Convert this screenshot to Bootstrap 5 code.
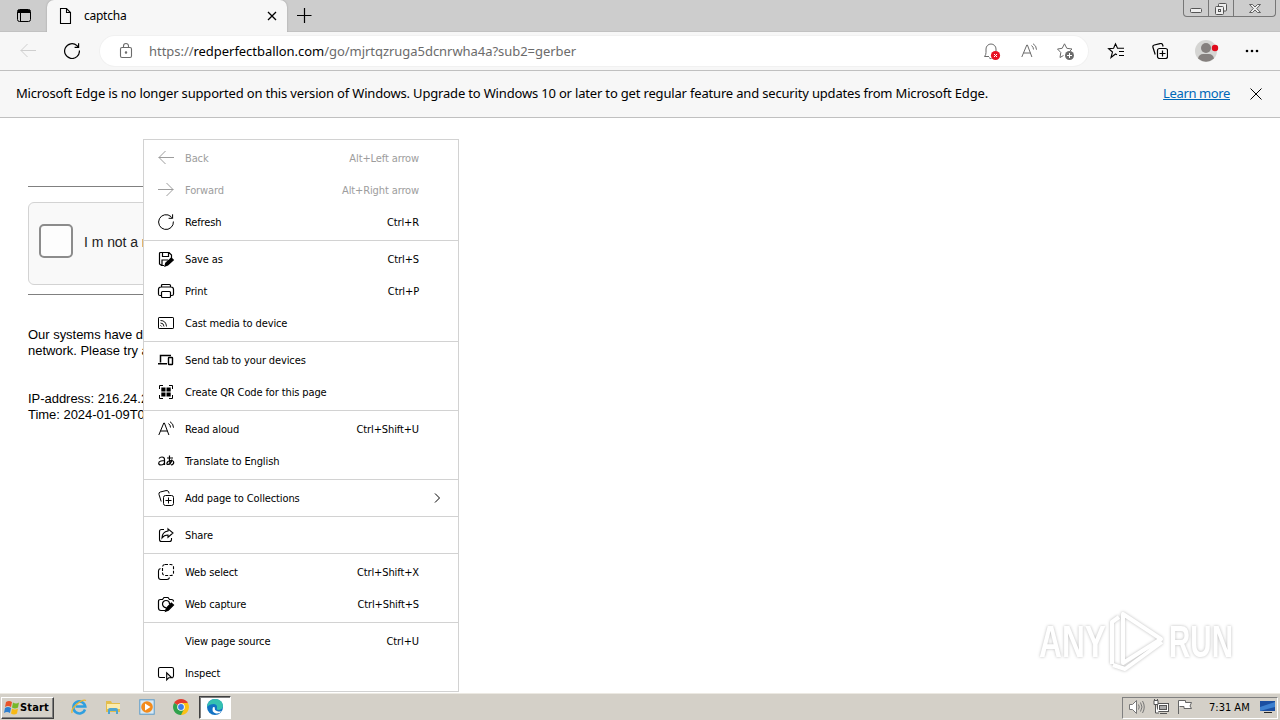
<!DOCTYPE html>
<html lang="en">
<head>
    <meta charset="UTF-8">
    <meta name="viewport" content="width=device-width, initial-scale=1.0">
    <title>captcha</title>
    <link rel="stylesheet" href="https://cdn.jsdelivr.net/npm/bootstrap@5.3.3/dist/css/bootstrap.min.css">
    <style>
        body { height: 720px; font-family: "Noto Sans", sans-serif; font-size: 13px; color: #000; line-height: 1; }
        svg { display: block; flex: none; overflow: visible; }
        svg:not([fill]) { fill: none; }
        svg:not([stroke]) { stroke: currentColor; }
        .titlebar { height: 32px; background: #cdcdcd; border-bottom: 1px solid #c2c2c2; }
        .tab-actions { width: 47px; padding: 8px 0 0 16px; }
        .tab-page { width: 240px; height: 32px; padding: 0 10px 0 11px; background: #f7f7f7; border-radius: 7px 7px 0 0; box-shadow: 0 0 2px #999; clip-path: inset(0 -3px 0 -3px); }
        .tab-title { font-size: 12px; margin-left: 10px; letter-spacing: -.25px; }
        .new-tab { margin: 8px 0 0 7px; }
        .win-buttons { height: 17px; margin-right: 4px; border: 1px solid #777; border-top: 0; border-radius: 0 0 4px 4px; color: #555; }
        .win-buttons > span { height: 16px; width: 25px; border-right: 1px solid #777; }
        .win-buttons > span:last-child { width: 41px; border: 0; }
        .toolbar { height: 39px; background: #f7f7f7; border-bottom: 1px solid #c0c0c0; padding-left: 20px; }
        .reload { margin-left: 28px; }
        .address { width: 988px; height: 30px; margin-left: 20px; border-radius: 15px; background: #fff; box-shadow: 0 0 0 1px #f1f1f1; padding: 0 14px 0 18px; color: #6b6b6b; }
        .address-icons { gap: 21px; }
        .url { font-size: 13px; margin-left: 15px; letter-spacing: -.04px; white-space: nowrap; }
        .more { margin-right: 4px; }
        .infobar { height: 47px; background: #f7f7f7; border-bottom: 1px solid #c0c0c0; padding: 0 17px 2px 16px; }
        .infobar a { color: #0067b8; letter-spacing: -.38px; }
        .infobar-text { letter-spacing: -.175px; white-space: nowrap; }
        .infobar svg { margin: 2px 0 0 3px; }
        .page { font-family: "Liberation Sans", Arial, sans-serif; padding: 68px 28px 0; line-height: 16px; }
        .rule { height: 1px; background: #808080; width: 300px; }
        .captcha { width: 300px; height: 83px; margin: 15px 0 9px; padding: 0 0 5px 10px; background: #f9f9f9; border: 1px solid #d3d3d3; border-radius: 6px; font-size: 14px; color: #222; }
        .captcha-label { padding-top: 2px; letter-spacing: -.05px; }
        .check { width: 34px; height: 34px; border: 2px solid #8c8c8c; border-radius: 5px; background: #fdfdfd; margin-right: 11px; }
        .details { letter-spacing: -.03px; white-space: nowrap; width: 320px; }
        .ctx { left: 143px; top: 21px; width: 316px; padding: 2px 0; background: #fff; border: 1px solid #d2d2d2; font: 11px/32px "DejaVu Sans Condensed", Tahoma, sans-serif; z-index: 2; }
        .ctx-row { height: 32px; padding: 1px 39px 0 14px; letter-spacing: -.12px; }
        .ctx-row > svg { width: 16px; height: 16px; margin: -1px 11px 0 0; }
        .ctx-row.off { color: #9d9d9d; }
        .ctx-row.flyout { padding-right: 16px; }
        .ctx-row > .chevron { width: 9px; height: 10px; margin-right: 0; }
        .ctx-row.no-icon { padding-left: 41px; }
        .ctx-line { height: 1px; background: #d2d2d2; margin: 2px 0; }
        .watermark { right: 46px; bottom: 20px; color: #fff; filter: drop-shadow(0 0 1.8px #bbb); }
        .watermark text { font: bold 44px "Liberation Sans Narrow", "Liberation Sans", sans-serif; fill: #fff; stroke: none; }
        .taskbar { height: 27px; background: #d4d0c8; border-top: 1px solid #ece9e2; font: 11px/1 "DejaVu Sans Condensed", Tahoma, sans-serif; padding: 2px 2px 1px 1px; }
        .start { width: 53px; height: 22px; background: #d4d0c8; border: 1px solid; border-color: #fff #404040 #404040 #fff; box-shadow: inset -1px -1px #808080; padding: 0 0 1px 2px; font-weight: bold; letter-spacing: .15px; }
        .quick { margin-left: 17px; gap: 18px; padding-bottom: 1px; }
        .task { width: 32px; height: 23px; margin-left: 10px; background: #fff; border: 1px solid; border-color: #404040 #fff #fff #404040; box-shadow: inset 1px 1px #808080; padding-bottom: 1px; }
        .tray { width: 156px; height: 22px; border: 1px solid; border-color: #808080 #fff #fff #808080; padding: 0 1px 1px 5px; }
        .clock { margin-left: 16px; white-space: nowrap; }
    </style>
</head>
<body class="d-flex flex-column overflow-hidden bg-white">

    <!-- shared icons, 16x16 grid -->
    <svg width="0" height="0" class="position-absolute">
        <symbol id="back" viewBox="0 0 16 16"><path d="M16 7.500H.7M7.500 1 1 7.500 7.500 14"/></symbol>
        <symbol id="forward" viewBox="0 0 16 16"><path d="M0 7.500h15.300M8.500 1 15 7.500 8.500 14"/></symbol>
        <symbol id="refresh" viewBox="0 0 16 16"><path d="M15.400 7.500A7.400 7.400 0 1 1 13 2.600l1.500 1.600M14.600.3v4h-4"/></symbol>
        <symbol id="collections" viewBox="0 0 16 16"><rect x="5.500" y="5.500" width="10" height="10" rx="2"/><path d="M10.500 7.500v6M7.500 10.500h6M3.200 11.500 1 4.500Q.4 2.500 2.300 2L8 .6q2-.5 2.700 1.400l.4 1.500"/></symbol>
        <symbol id="aloud" viewBox="0 0 16 16"><path d="M.8 14 5.800 2h.6l4.500 12M2.500 10h7M10.500 2.500q2 1.500 2 4M12 .7q3.500 2 3.500 6"/></symbol>
    </svg>

    <div class="titlebar d-flex flex-shrink-0">
        <div class="tab-actions">
            <svg width="16" height="16"><rect x="1.500" y="1.500" width="13" height="12" rx="2"/><path d="M2 3.500h12" stroke-width="3"/><path d="M4.500 4v10"/></svg>
        </div>
        <div class="tab-page d-flex align-items-center">
            <svg width="16" height="16" stroke-width="1.100"><path d="M2.500.5h6l4 4v11h-10zM8.500.5v4h4"/></svg>
            <span class="tab-title">captcha</span>
            <svg class="ms-auto" width="10" height="10" stroke-width="1.300"><path d="m1 1 8 8M9 1 1 9"/></svg>
        </div>
        <svg class="new-tab" width="20" height="16" stroke-width="1.200"><path d="M3 7.500h14.500M10.500 0v15"/></svg>
        <div class="win-buttons d-flex ms-auto">
            <span class="d-flex justify-content-center pt-2"><svg width="12" height="5"><rect x=".5" y=".5" width="11" height="4" rx="1" fill="#eee"/></svg></span>
            <span class="d-flex justify-content-center"><svg width="12" height="12" class="mt-1 mb-1" viewBox="0 1 12 12"><rect x="3.500" y=".5" width="8" height="7.500" rx="1" fill="#eee"/><rect x=".5" y="3.500" width="8" height="8" rx="1" fill="#eee"/><rect x="3.500" y="6.500" width="2" height="2"/></svg></span>
            <span class="d-flex justify-content-center pt-1"><svg width="12" height="9"><path d="M.5.5h3L6 3 8.500.5h3L7.700 4.500l3.800 4h-3L6 6l-2.500 2.500h-3l3.800-4z" fill="#eee" stroke-width=".9"/></svg></span>
        </div>
    </div>

    <div class="toolbar d-flex align-items-center flex-shrink-0">
        <svg width="16" height="16" stroke="#cfcfcf"><use href="#back"/></svg>
        <svg class="reload" width="16" height="16" stroke-width="1.200"><use href="#refresh"/></svg>
        <div class="address d-flex align-items-center">
            <svg width="16" height="16" stroke-width="1.100"><rect x="2.500" y="4.500" width="11" height="10" rx="1.500"/><path d="M5.500 4.500V3a2.500 2.500 0 0 1 5 0v1.500"/><circle cx="8" cy="9.500" r=".7" fill="currentColor"/></svg>
            <span class="url">https://<span class="text-black">redperfectballon.com</span>/go/mjrtqzruga5dcnrwha4a?sub2=gerber</span>
            <div class="address-icons d-flex ms-auto align-items-center">
                <svg width="16" height="16"><path d="M5 13.500H.5Q2 12 2 9.500V6a5 5 0 0 1 10 0v2M5 14.500q1 1.500 2.500 1"/><circle cx="11.500" cy="12.500" r="4.600" fill="#e81123" stroke="none"/><path d="m10 11 3 3M13 11l-3 3" stroke="#fff"/></svg>
                <svg width="16" height="16"><use href="#aloud"/></svg>
                <svg width="16" height="16"><path d="M5.500 12.500 2 14.500l.8-5L-.5 6l4.700-.7L6.500.8l2.300 4.500 5.200.7-2 2"/><circle cx="11.500" cy="12.500" r="4.500" fill="#6b6b6b" stroke="none"/><path d="M9 12.500h5M11.500 10v5" stroke="#fff"/></svg>
            </div>
        </div>
        <div class="d-flex align-items-center flex-grow-1 justify-content-between ps-3 pe-3">
            <svg class="ms-1" width="17" height="16" stroke-width="1.100"><path d="M9 11.700 7.500 11 3 14.500l1.500-5.500L.6 5.600l5-.3L7.500.8l2 4.500H16M11 8.500h5M11 12.500h5"/></svg>
            <svg width="16" height="16" stroke-width="1.200"><use href="#collections"/></svg>
            <svg width="23" height="22" stroke="none"><circle cx="12" cy="11" r="11" fill="#d5d5d3"/><circle cx="12" cy="8" r="5" fill="#85807e"/><path d="M4 18.500Q5 14 9 14h6q4 0 5 4.500-8 6.500-16 0z" fill="#85807e"/><circle cx="21" cy="8" r="3.200" fill="#e00b1c"/></svg>
            <svg class="more" width="16" height="4" fill="currentColor" stroke="none"><circle cx="3" cy="2" r="1.300"/><circle cx="8" cy="2" r="1.300"/><circle cx="13" cy="2" r="1.300"/></svg>
        </div>
    </div>

    <div class="infobar d-flex align-items-center flex-shrink-0">
        <span class="infobar-text">Microsoft Edge is no longer supported on this version of Windows. Upgrade to Windows 10 or later to get regular feature and security updates from Microsoft Edge.</span>
        <a href="#" class="ms-auto me-3">Learn more</a>
        <svg width="14" height="14"><path d="m1.500 1.500 11 11m0-11-11 11"/></svg>
    </div>

    <main class="page flex-grow-1 position-relative">
        <div class="rule"></div>
        <div class="captcha d-flex align-items-center"><div class="check"></div><span class="captcha-label">I m not a robot</span></div>
        <div class="rule"></div>
        <div class="details pt-4 mt-2">
            Our systems have detected<br>network. Please try again<br><br><br>IP-address: 216.24.213.1<br>Time: 2024-01-09T07:31
        </div>

        <div class="ctx position-absolute">
            <div class="ctx-row off d-flex align-items-center"><svg><use href="#back"/></svg>Back<span class="ms-auto">Alt+Left arrow</span></div>
            <div class="ctx-row off d-flex align-items-center"><svg><use href="#forward"/></svg>Forward<span class="ms-auto">Alt+Right arrow</span></div>
            <div class="ctx-row d-flex align-items-center"><svg><use href="#refresh"/></svg>Refresh<span class="ms-auto">Ctrl+R</span></div>
            <div class="ctx-line"></div>
            <div class="ctx-row d-flex align-items-center"><svg stroke-width="1.200"><path d="M6 14.500H3.500l-2-1.500V2.500q0-1 1-1h8.500l2.500 2.500v3M4.500 1.500v4h6v-4M4 14V9h6"/><path d="m7 15 .8-3 5.500-5 2 2-5.500 5z" fill="currentColor"/></svg>Save as<span class="ms-auto">Ctrl+S</span></div>
            <div class="ctx-row d-flex align-items-center"><svg stroke-width="1.200"><path d="M3.500 4V2.500q0-1 1-1h7q1 0 1 1V4M4 12.500H2q-1.500 0-1.500-1.500V6.500q0-2.500 2.500-2.500h10q2.500 0 2.500 2.500V11q0 1.500-1.500 1.500h-2"/><rect x="3.500" y="8.500" width="9" height="6" rx="1"/></svg>Print<span class="ms-auto">Ctrl+P</span></div>
            <div class="ctx-row d-flex align-items-center"><svg><rect x=".5" y="2.500" width="15" height="11" rx=".6"/><path d="M2.500 5.500q5.500 0 6 6M2.500 8q3.300 0 3.500 3.500M2.500 10.300l1.200 1.200" stroke-width=".9"/></svg>Cast media to device</div>
            <div class="ctx-line"></div>
            <div class="ctx-row d-flex align-items-center"><svg><path d="M2.500 10.500v-7H13M0 11.700h9" stroke-width="1.500"/><rect x="10.500" y="5.500" width="4" height="7" rx=".6" stroke-width="1.400"/></svg>Send tab to your devices</div>
            <div class="ctx-row d-flex align-items-center"><svg><path d="M1.500 5V1.500H5M11 1.500h3.500V5M14.500 11v3.500H11M5 14.500H1.500V11"/><path d="M3.300 3.500h4.200v4H3.300zM8.500 3.500h4.200v4H8.500zM3.300 8.500h4.200v4H3.300zM8.500 8.500h4.200v4H8.500z" fill="currentColor" stroke="none"/></svg>Create QR Code for this page</div>
            <div class="ctx-line"></div>
            <div class="ctx-row d-flex align-items-center"><svg><use href="#aloud"/></svg>Read aloud<span class="ms-auto">Ctrl+Shift+U</span></div>
            <div class="ctx-row d-flex align-items-center"><svg stroke-width="1.200"><path d="M1 5.500q1-1.500 3-1.500 2.500 0 2.500 2.500V12M6.500 7.500 3 8Q.7 8.500.7 10.200T3 12q3 0 3.500-2.500"/><path d="M9 5h6M11.500 2.500q-.6 5 .8 9M14 6.500q-1 4.500-4 5-1.500 0-1-1.500 1-2.500 4-2.500 2.700 0 2.700 2t-2.700 2.500"/></svg>Translate to English</div>
            <div class="ctx-line"></div>
            <div class="ctx-row flyout d-flex align-items-center"><svg><use href="#collections"/></svg>Add page to Collections<svg class="chevron ms-auto"><path d="m2 .5 4.500 4.500L2 9.500"/></svg></div>
            <div class="ctx-line"></div>
            <div class="ctx-row d-flex align-items-center"><svg stroke-width="1.100"><path d="M6 2.500H3.500q-2 0-2 2v8q0 2 2 2h8q2 0 2-2V11"/><path d="M10 1.800 15 6l-5 4.200V8Q6 8 4 11q0-6 6-7z"/></svg>Share</div>
            <div class="ctx-line"></div>
            <div class="ctx-row d-flex align-items-center"><svg stroke-width="1.100"><rect x="4.500" y=".5" width="11" height="11" rx="2.500" stroke-dasharray="3 1.500"/><path d="M2.500 4.500q-2 .5-2 2.500v6q0 2.500 2.500 2.500h6q2 0 2.500-2"/></svg>Web select<span class="ms-auto">Ctrl+Shift+X</span></div>
            <div class="ctx-row d-flex align-items-center"><svg stroke-width="1.200"><path d="M7 14.500H3Q.5 14.500.5 12V5.500q0-2 2-2h2L6 1.500h4l1.500 2h2q2 0 2 2"/><path d="M8 11.500a3.500 3.500 0 1 1 3.500-3.500"/><path d="m7.500 15.300.8-3 5-5.300 2.200 2-5.200 5.300z" fill="currentColor"/></svg>Web capture<span class="ms-auto">Ctrl+Shift+S</span></div>
            <div class="ctx-line"></div>
            <div class="ctx-row no-icon d-flex align-items-center">View page source<span class="ms-auto">Ctrl+U</span></div>
            <div class="ctx-row d-flex align-items-center"><svg stroke-width="1.100"><path d="M7 12.500H2q-1.500 0-1.500-1.500V4Q.5 2.500 2 2.500h12q1.500 0 1.500 1.500v7q0 1.500-1.500 1.500"/><path d="M8.700 7.800v7l2-2h3z"/></svg>Inspect</div>
        </div>

        <div class="watermark position-absolute">
            <svg width="195" height="64" stroke="#fff" stroke-width="4">
                <text x="0" y="48" textLength="67" lengthAdjust="spacingAndGlyphs">ANY</text>
                <path d="M73 55V13l7-5M84 5v49l38-24zM74 56l12 4 37-27" stroke-linejoin="round"/>
                <text x="130" y="48" textLength="64" lengthAdjust="spacingAndGlyphs">RUN</text>
            </svg>
        </div>
    </main>

    <div class="taskbar d-flex align-items-center flex-shrink-0">
        <div class="start d-flex align-items-center">
            <svg width="16" height="16" stroke="none"><path d="M2 3q3-2 6 0L7 8Q4 6 1 8z" fill="#e8542a"/><path d="M9 3.500q3 2 6 0l-1 5q-3 2-6 0z" fill="#76b82a"/><path d="M1 9q3-2 6 0l-1 5q-3-2-6 0z" fill="#2d7fd0"/><path d="M8 9.500q3 2 6 0l-1 5q-3 2-6 0z" fill="#f7b916"/></svg>Start
        </div>
        <div class="quick d-flex align-items-center">
            <svg width="16" height="16"><path d="M14 10.500a6 6 0 1 1 .3-3H4.500" stroke="#2f9fdf" stroke-width="2.500"/><path d="M1 14q-1-4 5-9t9-3.500" stroke="#edb52c" stroke-width="1.300"/></svg>
            <svg width="16" height="16" stroke="none"><path d="M1 2h5l1 2h8v9H1z" fill="#e3bd4c"/><path d="M2 5h13v5H2z" fill="#fbebac"/><path d="M3 15v-4q0-2 2-2h6q2 0 2 2v4h-2v-3H5v3z" fill="#4fa5d0"/></svg>
            <svg width="16" height="16"><rect x=".8" y=".8" width="14.400" height="14.400" fill="#d8e9f5" stroke="#5b9bc9"/><circle cx="8" cy="8" r="5.800" fill="#f38b1c" stroke="none"/><path d="m6 4.500 5.500 3.500L6 11.500z" fill="#fff" stroke="none"/></svg>
            <svg width="16" height="16" stroke="none"><path d="M8 8 1.100 4A8 8 0 0 1 14.900 4z" fill="#e33b2e"/><path d="M8 8V4h6.900A8 8 0 0 1 8 16z" fill="#fbc116"/><path d="M1.100 4 8 8l3 2-3 6A8 8 0 0 1 1.100 4z" fill="#30a24c"/><circle cx="8" cy="8" r="3.800" fill="#fff"/><circle cx="8" cy="8" r="2.900" fill="#3b7de9"/></svg>
        </div>
        <div class="task d-flex align-items-center justify-content-center">
            <svg width="16" height="16" stroke="none"><circle cx="8" cy="8" r="8" fill="#1273c4"/><path d="M0 8Q1 0 8.500 0 16 1 16 7q-.5 4-5 4-2-.5-1-2 .5-3.500-3-4Q2.500 5 0 8z" fill="#35c1b1"/><path d="M6 8q-2 5 3 6.500 3.500.5 6-2.500-3 1-5 0Q7 11 8 8.500z" fill="#fff"/></svg>
        </div>
        <div class="tray d-flex align-items-center ms-auto">
            <svg width="17" height="16" stroke="#777"><path d="M1.500 5.500h3l4-4v13l-4-4h-3z" fill="#fff"/><path d="M10.500 5.500q1.500 2.500 0 5M12.500 3.500q3 4.500 0 9M14.500 2q3.500 6 0 12"/></svg>
            <svg class="ms-2" width="16" height="16" stroke="#555"><rect x="4.500" y="4.500" width="11" height="8" fill="#fff"/><rect x="6.500" y="6.500" width="7" height="4" fill="#aaa"/><path d="M7 14.500h7M2.500 6v8H6M1 1.500h4v4H1zM1.500 0v2M4.500 0v2" fill="#fff"/></svg>
            <svg class="ms-2" width="16" height="16" stroke="#666"><path d="M1.500 15V1.500h7v2h6L13 7l1.500 2.500H7v-2H2.500" fill="#fff"/></svg>
            <span class="clock">7:31 AM</span>
            <svg class="ms-auto" width="16" height="14" stroke="none"><path d="M0 1h15v10H0z" fill="#1b4ea1"/><path d="M0 7 15 2v5L0 11z" fill="#3d80d0"/><path d="M4 12h8v1H4z" fill="#222"/></svg>
        </div>
    </div>

    <script src="https://cdn.jsdelivr.net/npm/bootstrap@5.3.3/dist/js/bootstrap.bundle.min.js"></script>
</body>
</html>
